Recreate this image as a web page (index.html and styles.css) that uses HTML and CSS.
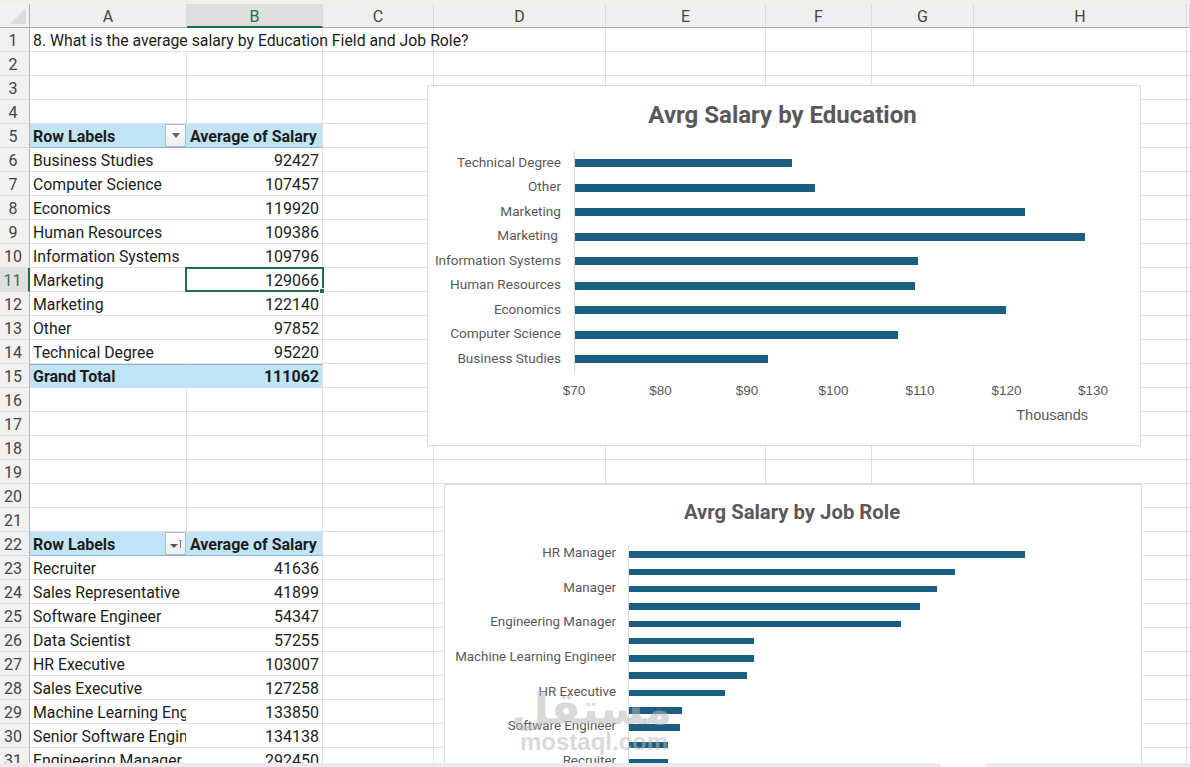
FILE: index.html
```html
<!DOCTYPE html>
<html lang="en">
<head>
<meta charset="utf-8">
<title>Salary pivot</title>
<link rel="stylesheet" href="styles.css">
</head>
<body>
<div class="top"></div>
<div class="sheet">
  <div class="row head"><i class="rh corner"></i><i class="ch">A</i><i class="ch on">B</i><i class="ch">C</i><i class="ch">D</i><i class="ch">E</i><i class="ch">F</i><i class="ch">G</i><i class="ch">H</i><i class="ch"></i></div>
  <div class="row"><i class="rh">1</i><i class="c over">8. What is the average salary by Education Field and Job Role?</i><i class="c"></i><i class="c"></i><i class="c"></i><i class="c"></i><i class="c"></i><i class="c"></i><i class="c"></i><i class="c"></i></div>
  <div class="row"><i class="rh">2</i><i class="c"></i><i class="c"></i><i class="c"></i><i class="c"></i><i class="c"></i><i class="c"></i><i class="c"></i><i class="c"></i><i class="c"></i></div>
  <div class="row"><i class="rh">3</i><i class="c"></i><i class="c"></i><i class="c"></i><i class="c"></i><i class="c"></i><i class="c"></i><i class="c"></i><i class="c"></i><i class="c"></i></div>
  <div class="row"><i class="rh">4</i><i class="c"></i><i class="c"></i><i class="c"></i><i class="c"></i><i class="c"></i><i class="c"></i><i class="c"></i><i class="c"></i><i class="c"></i></div>
  <div class="row"><i class="rh">5</i><i class="c hd">Row Labels<b class="filter"><svg viewBox="0 0 8 5" class="arrow"><path d="M0 0h8L4 5z"/></svg></b></i><i class="c hd val">Average of Salary</i><i class="c"></i><i class="c"></i><i class="c"></i><i class="c"></i><i class="c"></i><i class="c"></i><i class="c"></i></div>
  <div class="row"><i class="rh">6</i><i class="c p">Business Studies</i><i class="c p n">92427</i><i class="c"></i><i class="c"></i><i class="c"></i><i class="c"></i><i class="c"></i><i class="c"></i><i class="c"></i></div>
  <div class="row"><i class="rh">7</i><i class="c p">Computer Science</i><i class="c p n">107457</i><i class="c"></i><i class="c"></i><i class="c"></i><i class="c"></i><i class="c"></i><i class="c"></i><i class="c"></i></div>
  <div class="row"><i class="rh">8</i><i class="c p">Economics</i><i class="c p n">119920</i><i class="c"></i><i class="c"></i><i class="c"></i><i class="c"></i><i class="c"></i><i class="c"></i><i class="c"></i></div>
  <div class="row"><i class="rh">9</i><i class="c p">Human Resources</i><i class="c p n">109386</i><i class="c"></i><i class="c"></i><i class="c"></i><i class="c"></i><i class="c"></i><i class="c"></i><i class="c"></i></div>
  <div class="row"><i class="rh">10</i><i class="c p">Information Systems</i><i class="c p n">109796</i><i class="c"></i><i class="c"></i><i class="c"></i><i class="c"></i><i class="c"></i><i class="c"></i><i class="c"></i></div>
  <div class="row"><i class="rh cur">11</i><i class="c p">Marketing</i><i class="c p n sel">129066<b class="handle"></b></i><i class="c"></i><i class="c"></i><i class="c"></i><i class="c"></i><i class="c"></i><i class="c"></i><i class="c"></i></div>
  <div class="row"><i class="rh">12</i><i class="c p">Marketing</i><i class="c p n">122140</i><i class="c"></i><i class="c"></i><i class="c"></i><i class="c"></i><i class="c"></i><i class="c"></i><i class="c"></i></div>
  <div class="row"><i class="rh">13</i><i class="c p">Other</i><i class="c p n">97852</i><i class="c"></i><i class="c"></i><i class="c"></i><i class="c"></i><i class="c"></i><i class="c"></i><i class="c"></i></div>
  <div class="row"><i class="rh">14</i><i class="c p">Technical Degree</i><i class="c p n">95220</i><i class="c"></i><i class="c"></i><i class="c"></i><i class="c"></i><i class="c"></i><i class="c"></i><i class="c"></i></div>
  <div class="row"><i class="rh">15</i><i class="c tot">Grand Total</i><i class="c tot r">111062</i><i class="c"></i><i class="c"></i><i class="c"></i><i class="c"></i><i class="c"></i><i class="c"></i><i class="c"></i></div>
  <div class="row"><i class="rh">16</i><i class="c"></i><i class="c"></i><i class="c"></i><i class="c"></i><i class="c"></i><i class="c"></i><i class="c"></i><i class="c"></i><i class="c"></i></div>
  <div class="row"><i class="rh">17</i><i class="c"></i><i class="c"></i><i class="c"></i><i class="c"></i><i class="c"></i><i class="c"></i><i class="c"></i><i class="c"></i><i class="c"></i></div>
  <div class="row"><i class="rh">18</i><i class="c"></i><i class="c"></i><i class="c"></i><i class="c"></i><i class="c"></i><i class="c"></i><i class="c"></i><i class="c"></i><i class="c"></i></div>
  <div class="row"><i class="rh">19</i><i class="c"></i><i class="c"></i><i class="c"></i><i class="c"></i><i class="c"></i><i class="c"></i><i class="c"></i><i class="c"></i><i class="c"></i></div>
  <div class="row"><i class="rh">20</i><i class="c"></i><i class="c"></i><i class="c"></i><i class="c"></i><i class="c"></i><i class="c"></i><i class="c"></i><i class="c"></i><i class="c"></i></div>
  <div class="row"><i class="rh">21</i><i class="c"></i><i class="c"></i><i class="c"></i><i class="c"></i><i class="c"></i><i class="c"></i><i class="c"></i><i class="c"></i><i class="c"></i></div>
  <div class="row"><i class="rh">22</i><i class="c hd">Row Labels<b class="filter"><svg viewBox="0 0 14 12" class="sort"><path class="fill" d="M1 6h8L5 10z"/><path class="line" d="M11.500 10V2M10.500 3l1-1 1 1"/></svg></b></i><i class="c hd val">Average of Salary</i><i class="c"></i><i class="c"></i><i class="c"></i><i class="c"></i><i class="c"></i><i class="c"></i><i class="c"></i></div>
  <div class="row"><i class="rh">23</i><i class="c p">Recruiter</i><i class="c p n">41636</i><i class="c"></i><i class="c"></i><i class="c"></i><i class="c"></i><i class="c"></i><i class="c"></i><i class="c"></i></div>
  <div class="row"><i class="rh">24</i><i class="c p">Sales Representative</i><i class="c p n">41899</i><i class="c"></i><i class="c"></i><i class="c"></i><i class="c"></i><i class="c"></i><i class="c"></i><i class="c"></i></div>
  <div class="row"><i class="rh">25</i><i class="c p">Software Engineer</i><i class="c p n">54347</i><i class="c"></i><i class="c"></i><i class="c"></i><i class="c"></i><i class="c"></i><i class="c"></i><i class="c"></i></div>
  <div class="row"><i class="rh">26</i><i class="c p">Data Scientist</i><i class="c p n">57255</i><i class="c"></i><i class="c"></i><i class="c"></i><i class="c"></i><i class="c"></i><i class="c"></i><i class="c"></i></div>
  <div class="row"><i class="rh">27</i><i class="c p">HR Executive</i><i class="c p n">103007</i><i class="c"></i><i class="c"></i><i class="c"></i><i class="c"></i><i class="c"></i><i class="c"></i><i class="c"></i></div>
  <div class="row"><i class="rh">28</i><i class="c p">Sales Executive</i><i class="c p n">127258</i><i class="c"></i><i class="c"></i><i class="c"></i><i class="c"></i><i class="c"></i><i class="c"></i><i class="c"></i></div>
  <div class="row"><i class="rh">29</i><i class="c p">Machine Learning Engineer</i><i class="c p n">133850</i><i class="c"></i><i class="c"></i><i class="c"></i><i class="c"></i><i class="c"></i><i class="c"></i><i class="c"></i></div>
  <div class="row"><i class="rh">30</i><i class="c p">Senior Software Engineer</i><i class="c p n">134138</i><i class="c"></i><i class="c"></i><i class="c"></i><i class="c"></i><i class="c"></i><i class="c"></i><i class="c"></i></div>
  <div class="row"><i class="rh">31</i><i class="c p">Engineering Manager</i><i class="c p n">292450</i><i class="c"></i><i class="c"></i><i class="c"></i><i class="c"></i><i class="c"></i><i class="c"></i><i class="c"></i></div>
</div>

<section class="chart edu">
  <h2>Avrg Salary by Education</h2>
  <div class="plot">
    <div class="bar"><span>Technical Degree</span><u style="width:217px"></u></div>
    <div class="bar"><span>Other</span><u style="width:240px"></u></div>
    <div class="bar"><span>Marketing</span><u style="width:450px"></u></div>
    <div class="bar"><span class="off">Marketing</span><u style="width:510px"></u></div>
    <div class="bar"><span>Information Systems</span><u style="width:343px"></u></div>
    <div class="bar"><span>Human Resources</span><u style="width:340px"></u></div>
    <div class="bar"><span>Economics</span><u style="width:431px"></u></div>
    <div class="bar"><span>Computer Science</span><u style="width:323px"></u></div>
    <div class="bar"><span>Business Studies</span><u style="width:193px"></u></div>
  </div>
  <div class="axis"><em>$70</em><em>$80</em><em>$90</em><em>$100</em><em>$110</em><em>$120</em><em>$130</em></div>
  <div class="unit">Thousands</div>
</section>

<section class="chart job">
  <h2>Avrg Salary by Job Role</h2>
  <div class="plot">
    <div class="bar"><span>HR Manager</span><u style="width:396px"></u></div>
    <div class="bar"><span></span><u style="width:326px"></u></div>
    <div class="bar"><span>Manager</span><u style="width:308px"></u></div>
    <div class="bar"><span></span><u style="width:291px"></u></div>
    <div class="bar"><span>Engineering Manager</span><u style="width:272px"></u></div>
    <div class="bar"><span></span><u style="width:125px"></u></div>
    <div class="bar"><span>Machine Learning Engineer</span><u style="width:125px"></u></div>
    <div class="bar"><span></span><u style="width:118px"></u></div>
    <div class="bar"><span>HR Executive</span><u style="width:96px"></u></div>
    <div class="bar"><span></span><u style="width:53px"></u></div>
    <div class="bar"><span>Software Engineer</span><u style="width:51px"></u></div>
    <div class="bar"><span></span><u style="width:39px"></u></div>
    <div class="bar"><span>Recruiter</span><u style="width:39px"></u></div>
  </div>
</section>

<div class="mark"><div class="ar" lang="ar" dir="rtl">مستقل</div><div class="en">mostaql.com</div></div>
<div class="tabs"><div class="tab one"></div><div class="tab two"></div></div>
</body>
</html>
```
FILE: styles.css
```css
* { box-sizing: border-box; }
html, body { margin: 0; height: 767px; overflow: hidden; background: #fff; }
body { position: relative; font-family: Roboto, sans-serif; color: #1c1c1c; }
i, em { font-style: normal; }
u { text-decoration: none; }

.top { height: 4px; background: #f0f0eb; }
.sheet { display: flex; flex-direction: column; }
.row { display: grid; grid-template-columns: 30px 157px 136px 111px 172px 160px 106px 102px 213px 3px; grid-template-rows: 24px; height: 24px; font-size: 15.8px; line-height: 23px; }

.rh { background: #f1f1f1; color: #444; text-align: center; border-right: 1px solid #b4b4b4; border-bottom: 1px solid #dcdcdc; font-size: 16px; padding: 1px 3px 0 0; }
.rh.cur { background: #e0e0e0; color: #3f6f58; border-right: 2px solid #1f6b45; }
.rh.corner { border-bottom: 1px solid #a8a8a8; position: relative; }
.rh.corner::after { content: ""; position: absolute; right: 3px; bottom: 3px; border-style: solid; border-width: 0 0 16px 16px; border-color: transparent transparent #dcdcdc transparent; }
.ch { background: #efefef; color: #444; text-align: center; border-right: 1px solid #dcdcdc; border-bottom: 1px solid #a8a8a8; font-size: 16px; padding-top: 1px; }
.ch.on { background: #dedede; color: #217346; border-bottom: 2px solid #1f6b45; }

.c { display: block; position: relative; border-right: 1px solid #e1e1e1; border-bottom: 1px solid #e1e1e1; padding: 1px 3px 0; white-space: nowrap; overflow: hidden; color: #1c1c1c; }
.c.over { overflow: visible; border-right-color: transparent; z-index: 1; }
.c.p { border-right-color: transparent; }
.c.p.n, .c.hd.val, .c.tot.r { border-right-color: #e1e1e1; }
.c.n, .c.r { text-align: right; }
.c.n { font-size: 16px; }
.c.hd { background: #c0e4f5; font-weight: 700; font-size: 16px; border-bottom: 1px solid #83b9d3; border-right-color: transparent; overflow: visible; }
.c.tot { background: #c0e4f5; font-weight: 700; font-size: 16px; padding-top: 1px; border-top: 1px solid #83b9d3; border-bottom-color: #c0e4f5; border-right-color: transparent; line-height: 22px; }
.c.sel { overflow: visible; z-index: 2; }
.c.sel::after { content: ""; position: absolute; left: -2px; top: -1px; right: -2px; bottom: -1px; border: 2px solid #2a6a4c; }
.handle { position: absolute; right: -3px; bottom: -3px; width: 6px; height: 6px; background: #1f6b45; border: 1px solid #fff; z-index: 3; }

.filter { position: absolute; right: 0; top: 0; width: 21px; height: 23px; background: linear-gradient(#fff, #ececec); border: 1px solid #aebfc9; display: flex; align-items: center; justify-content: center; }
.arrow { width: 8px; height: 5px; fill: #666; }
.sort { width: 14px; height: 12px; }
.sort .fill { fill: #555; }
.sort .line { fill: none; stroke: #777; stroke-width: 1; }

.chart { position: absolute; background: #fff; border: 1px solid #d9d9d9; font-family: Roboto, sans-serif; color: #595959; }
.chart h2 { margin: 0; text-align: center; font-family: Roboto, sans-serif; font-weight: 700; color: #595959; white-space: nowrap; }
.edu { left: 427px; top: 85px; width: 714px; height: 361px; }
.edu h2 { font-size: 24px; line-height: 28px; padding: 15px 0 0; margin-left: -3px; }
.job { left: 444px; top: 484px; width: 698px; height: 290px; }
.job h2 { font-size: 20.3px; line-height: 24px; padding: 15px 0 0; margin-left: -2px; }

.plot { position: absolute; display: flex; flex-direction: column; border-left: 1px solid #d9d9d9; }
.edu .plot { left: 146px; top: 65px; height: 222px; }
.job .plot { left: 183px; top: 61px; }
.bar { position: relative; display: flex; align-items: center; }
.edu .bar { height: 24.5px; }
.job .bar { height: 17.3px; }
.bar u { display: block; background: #1a5f7f; }
.edu .bar u { height: 8px; }
.job .bar u { height: 6.500px; }
.bar span { position: absolute; right: 100%; margin-top: -3px; margin-right: 14px; white-space: nowrap; line-height: 18px; }
.edu .bar span { font-size: 13.6px; }
.job .bar span { font-size: 13.350px; margin-right: 13px; }
.bar span.off { margin-right: 17px; }

.axis { position: absolute; left: 126px; top: 296px; display: flex; width: 559px; justify-content: space-between; font-family: "Liberation Sans", sans-serif; font-size: 13.5px; line-height: 18px; }
.axis em { width: 40px; text-align: center; }
.unit { position: absolute; right: 52px; top: 320px; font-family: "Liberation Sans", sans-serif; font-size: 14.500px; line-height: 18px; }

.mark { position: absolute; left: 516px; top: 688px; width: 156px; text-align: center; color: rgba(185, 185, 185, .55); z-index: 5; pointer-events: none; }
.mark .ar { font-family: "DejaVu Sans", sans-serif; font-weight: 700; font-size: 44px; line-height: 42px; }
.mark .en { font-family: "Liberation Sans", sans-serif; font-weight: 700; font-size: 24px; line-height: 24px; }

.tabs { position: absolute; left: 0; right: 0; bottom: 0; height: 4px; display: flex; z-index: 6; }
.tab { background: #e8ecef; height: 4px; }
.tab.one { width: 941px; border-top-right-radius: 4px; }
.tab.two { margin-left: 44px; flex: 1; border-top-left-radius: 4px; }
```
